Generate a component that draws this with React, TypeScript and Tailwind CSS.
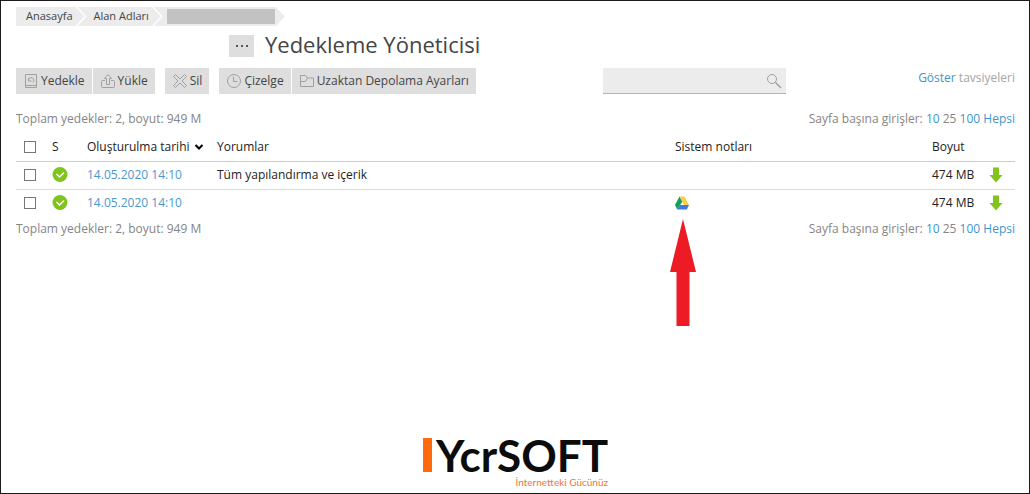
import type { ReactNode } from "react";

const backups = [
  { id: 1, date: "14.05.2020 14:10", comment: "Tüm yapılandırma ve içerik", size: "474 MB", drive: false },
  { id: 2, date: "14.05.2020 14:10", comment: "", size: "474 MB", drive: true },
];

const iconClass = "w-4 h-4 shrink-0 fill-none stroke-[#a0a0a0]";

function BackupIcon() {
  return (
    <svg viewBox="0 0 16 16" className={iconClass}>
      <path d="M2.500 1.500h11v13h-11zM2.500 12.500h11M5.500 5v3h3M5.500 7.500a2.700 2.700 0 1 1 4.300 2" />
    </svg>
  );
}

function UploadIcon() {
  return (
    <svg viewBox="0 0 16 16" className={iconClass}>
      <path d="M5 7.500H2.500a1 1 0 0 0-1 1v5a1 1 0 0 0 1 1h11a1 1 0 0 0 1-1v-5a1 1 0 0 0-1-1H11" />
      <path d="M6.500 11.500V5.500h-2L8 1.500l3.500 4h-2v6z" />
    </svg>
  );
}

function RemoveIcon() {
  return (
    <svg viewBox="0 0 16 16" className={iconClass}>
      <path d="M1.500 3.500l2-2L8 6l4.500-4.500 2 2L10 8l4.500 4.500-2 2L8 10l-4.500 4.500-2-2L6 8z" strokeLinejoin="round" />
    </svg>
  );
}

function ClockIcon() {
  return (
    <svg viewBox="0 0 16 16" className={iconClass}>
      <circle cx="8" cy="8" r="6.500" />
      <path d="M7.500 3.500v5h4" />
    </svg>
  );
}

function FolderIcon() {
  return (
    <svg viewBox="0 0 16 16" className={iconClass}>
      <path d="M1.500 13.500v-11h5l2 2.500h6v8.500zM1.500 8.500h5l2-3.500" />
    </svg>
  );
}

function CheckIcon() {
  return (
    <svg viewBox="0 0 16 16" className="block w-4 h-4">
      <circle cx="8" cy="7.500" r="7.500" fill="#80c41c" />
      <path d="M4.500 7L7.500 10L12 5.500" fill="none" stroke="#fff" strokeWidth="1.500" />
    </svg>
  );
}

function DriveIcon() {
  return (
    <svg viewBox="0 0 14 14" className="block w-[14px] h-[14px]">
      <path d="M4.500 0.500L0 9l2.200 4.500L7.500 5.500z" fill="#16a05d" />
      <path d="M4.500 0.500h5L14 9H9z" fill="#f8cf4a" />
      <path d="M5 9H14l-2.200 4.500H2.200z" fill="#3d7be0" />
    </svg>
  );
}

function Crumb({ children, first }: { children: ReactNode; first?: boolean }) {
  return (
    <li
      className={
        first
          ? "flex items-center h-[19px] pl-[10px] pr-3 bg-[#ececec] [clip-path:polygon(0_0,calc(100%-9px)_0,100%_50%,calc(100%-9px)_100%,0_100%)]"
          : "flex items-center h-[19px] -ml-[7px] pl-4 pr-3 bg-[#ececec] [clip-path:polygon(0_0,calc(100%-9px)_0,100%_50%,calc(100%-9px)_100%,0_100%,9px_50%)]"
      }
    >
      {children}
    </li>
  );
}

function ToolButton({ icon, children }: { icon: ReactNode; children: ReactNode }) {
  return (
    <button type="button" className="flex items-center gap-[2px] h-[26px] px-[7px] bg-[#dedede] text-[#454545] text-xs whitespace-nowrap">
      {icon}
      {children}
    </button>
  );
}

function Summary() {
  return (
    <div className="flex justify-between text-xs leading-4 text-[#858585]">
      <span>Toplam yedekler: 2, boyut: 949 M</span>
      <span>
        Sayfa başına girişler: <a href="#10" className="text-[#3d95cd]">10</a> 25{" "}
        <a href="#100" className="text-[#3d95cd]">100</a>{" "}
        <a href="#all" className="text-[#3d95cd]">Hepsi</a>
      </span>
    </div>
  );
}

function Checkbox({ label }: { label: string }) {
  return (
    <input
      type="checkbox"
      aria-label={label}
      className="block appearance-none w-3 h-3 ml-2 border border-[#777] bg-white checked:bg-[#3d95cd]"
    />
  );
}

export default function App() {
  return (
    <div className="min-h-screen flex flex-col border border-[#1c1a1e] bg-white pl-[15px] pr-[14px] pt-[6px] font-['Open_Sans',sans-serif] text-xs text-[#222]">
      {/* Breadcrumbs */}
      <nav>
        <ol className="flex text-[11px] text-[#454545]">
          <Crumb first>
            <a href="#home">Anasayfa</a>
          </Crumb>
          <Crumb>
            <a href="#domains">Alan Adları</a>
          </Crumb>
          <Crumb>
            <span className="block w-[108px] h-[15px] -ml-[3px] -mr-[2px] bg-[#c2c2c2]" />
          </Crumb>
        </ol>
      </nav>

      {/* Title */}
      <div className="flex items-center gap-[11px] mt-1 ml-[213px]">
        <button type="button" aria-label="Menü" className="flex items-center justify-center gap-[3px] w-[25px] h-[22px] mt-1 bg-[#dedede]">
          <i className="w-[2px] h-[2px] bg-[#555]" />
          <i className="w-[2px] h-[2px] bg-[#555]" />
          <i className="w-[2px] h-[2px] bg-[#555]" />
        </button>
        <h1 className="text-[22px] leading-7 text-[#454545]">Yedekleme Yöneticisi</h1>
      </div>

      {/* Toolbar */}
      <div className="flex items-start mt-[10px]">
        <div className="flex gap-[10px]">
          <div className="flex gap-px">
            <ToolButton icon={<BackupIcon />}>Yedekle</ToolButton>
            <ToolButton icon={<UploadIcon />}>Yükle</ToolButton>
          </div>
          <ToolButton icon={<RemoveIcon />}>Sil</ToolButton>
          <div className="flex gap-px">
            <ToolButton icon={<ClockIcon />}>Çizelge</ToolButton>
            <ToolButton icon={<FolderIcon />}>Uzaktan Depolama Ayarları</ToolButton>
          </div>
        </div>
        <div className="flex items-center w-[183px] h-[26px] ml-auto mr-[132px] pr-1 bg-[#ececec] border-b border-[#b5b5b5]">
          <input type="text" aria-label="Ara" className="flex-1 min-w-0 h-full px-2 outline-none" />
          <button type="button" aria-label="Ara">
            <svg viewBox="0 0 16 16" className="block w-4 h-4 fill-none stroke-[#a0a0a0]">
              <circle cx="6" cy="6" r="4.500" />
              <path d="M9.500 9.500L15 15" strokeWidth="1.500" />
            </svg>
          </button>
        </div>
        <span className="leading-4 mt-[2px] text-[#a5a5a5]">
          <a href="#show" className="text-[#3d95cd]">Göster</a> tavsiyeleri
        </span>
      </div>

      <div className="mt-[17px]">
        <Summary />
      </div>

      <table className="w-full table-fixed mt-[6px] text-left leading-4">
        <colgroup>
          <col className="w-9" />
          <col className="w-[35px]" />
          <col className="w-[130px]" />
          <col />
          <col className="w-[257px]" />
          <col className="w-[57px]" />
          <col className="w-[26px]" />
        </colgroup>
        <thead>
          <tr className="h-[28px] border-b border-[#c3ced6]">
            <th><Checkbox label="Tümünü seç" /></th>
            <th className="font-normal">S</th>
            <th className="font-normal">
              <button type="button" className="flex items-center gap-1">
                Oluşturulma tarihi
                <svg viewBox="0 0 10 8" className="w-[10px] h-2 fill-none stroke-black stroke-2">
                  <path d="M1.500 2L5 5.500L8.500 2" />
                </svg>
              </button>
            </th>
            <th className="font-normal">Yorumlar</th>
            <th className="font-normal">Sistem notları</th>
            <th className="font-normal">Boyut</th>
            <th />
          </tr>
        </thead>
        <tbody>
          {backups.map((backup) => (
            <tr key={backup.id} className="h-[28px] border-b border-[#dcdcdc] last:border-b-0">
              <td><Checkbox label={backup.date} /></td>
              <td><CheckIcon /></td>
              <td>
                <a href="#backup" className="text-[#4a98cf]">{backup.date}</a>
              </td>
              <td>{backup.comment}</td>
              <td>
                {backup.drive && (
                  <div className="relative w-[14px]">
                    <DriveIcon />
                    {/* pointer under the drive icon */}
                    <svg viewBox="0 0 26 107" className="absolute top-[23px] -left-[5px] w-[26px] h-[107px]">
                      <path d="M13 0L26 53H19.500V107H6.500V53H0z" fill="#ed1c24" />
                    </svg>
                  </div>
                )}
              </td>
              <td>{backup.size}</td>
              <td>
                <a href="#download" aria-label="İndir" className="block">
                  <svg viewBox="0 0 14 16" className="block w-[14px] h-4">
                    <path d="M4 0.500h6v7.500h3.500L7 15.500L0.500 8H4z" fill="#80c41c" />
                  </svg>
                </a>
              </td>
            </tr>
          ))}
        </tbody>
      </table>

      <div className="mt-1">
        <Summary />
      </div>

      {/* Logo */}
      <div className="mt-auto mb-[5px] self-center flex flex-col items-end">
        <div className="flex items-center">
          <span className="w-[9px] h-[34px] bg-[#ff6a0d]" />
          <span className="ml-1 font-['Lato',sans-serif] font-bold text-[44px] leading-[42px] text-[#0c0c0c]">YcrSOFT</span>
        </div>
        <span className="font-['Lato',sans-serif] text-[10px] leading-3 text-[#f0763a]">İnternetteki Gücünüz</span>
      </div>
    </div>
  );
}
